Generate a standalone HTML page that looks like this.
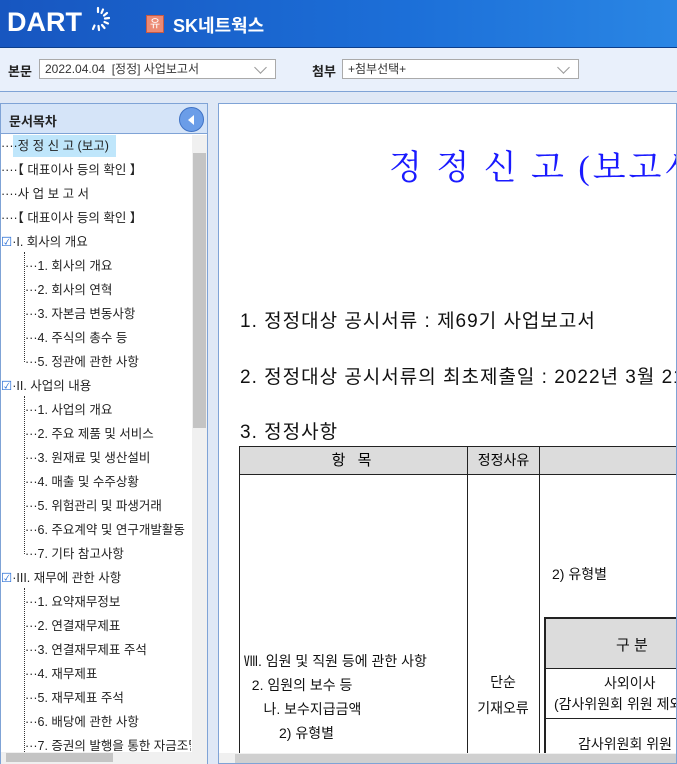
<!DOCTYPE html>
<html><head><meta charset="utf-8"><style>
*{margin:0;padding:0;box-sizing:border-box}
body{width:677px;height:764px;overflow:hidden;background:#dfe8f6;font-family:"Liberation Sans","Noto Sans CJK KR",sans-serif;position:relative}
.hdr{position:absolute;left:0;top:0;width:677px;height:48px;background:linear-gradient(90deg,#1756c0,#1c6fd8 60%,#2a86e4);border-bottom:1px solid #0d3f8c}
.tb{position:absolute;left:0;top:48px;width:677px;height:44px;background:#e9f0fb;border-bottom:1px solid #7fa3d6}
.lbl{position:absolute;top:13px;font-size:13px;font-weight:bold;color:#222}
.sel{position:absolute;top:11px;height:20px;background:#fff;border:1px solid #aaa;font-size:12px;color:#333;padding:2px 5px;line-height:14px}
.sel:after{content:"";position:absolute;right:10px;top:3px;width:8px;height:8px;border-right:1px solid #999;border-bottom:1px solid #999;transform:rotate(45deg)}
.lp{position:absolute;left:0;top:103px;width:208px;height:661px;background:#fff;border:1px solid #7fa3d6}
.lph{height:30px;background:#d5e4f8;border-bottom:1px solid #7fa3d6;font-size:13px;font-weight:bold;color:#222;padding:7px 8px}
.circ{position:absolute;left:178px;top:3px;width:25px;height:25px;border-radius:50%;background:#6b9de8;border:1px solid #3f72c4}
.circ:after{content:"";position:absolute;left:8px;top:7px;border-right:6px solid #fff;border-top:5px solid transparent;border-bottom:5px solid transparent}
.it{position:absolute;font-size:12.5px;color:#222;white-space:nowrap;line-height:16px}
.sb{position:absolute;left:191px;top:31px;width:15px;height:617px;background:#f0f0f0}
.doc{position:absolute;left:218px;top:103px;width:459px;height:661px;background:#fff;border:1px solid #7fa3d6;overflow:hidden}
.t{position:absolute;white-space:nowrap;color:#111}
.big{font-size:19px;letter-spacing:1px}
.cell{position:absolute;border:1px solid #222}
</style></head><body>
<div class="hdr">
<div style="position:absolute;left:7px;top:7px;font-size:27px;font-weight:bold;color:#fff;font-family:'Liberation Sans',sans-serif">DART</div>
<svg style="position:absolute;left:86px;top:6px" width="24" height="26" viewBox="0 0 24 26"><g stroke="#fff" stroke-width="2.2" stroke-linecap="round"><line x1="12" y1="2" x2="12" y2="6"/><line x1="17" y1="3.5" x2="15.5" y2="7"/><line x1="21" y1="7" x2="18" y2="9.5"/><line x1="23" y1="12" x2="19" y2="12.5"/><line x1="22" y1="17.5" x2="18.5" y2="16"/><line x1="18.5" y1="22" x2="16" y2="19"/><line x1="13" y1="24" x2="12.5" y2="20"/><line x1="7" y1="23" x2="8.5" y2="19.5"/></g></svg>
<div style="position:absolute;left:146px;top:15px;width:18px;height:18px;background:#ec8a74;border:1px solid #c65a44;color:#fff;font-size:11px;text-align:center;line-height:16px">유</div>
<div style="position:absolute;left:173px;top:12px;font-size:18px;font-weight:bold;color:#fff">SK네트웍스</div>
</div>
<div class="tb">
<div class="lbl" style="left:8px">본문</div>
<div class="sel" style="left:39px;width:237px">2022.04.04 &nbsp;[정정] 사업보고서</div>
<div class="lbl" style="left:312px">첨부</div>
<div class="sel" style="left:342px;width:237px">+첨부선택+</div>
</div>
<div class="lp">
<div class="lph">문서목차<div class="circ"></div></div>
<div class="sb"><div style="position:absolute;left:1px;top:18px;width:13px;height:275px;background:#c4c4c4"></div></div>
<div style="position:absolute;left:12px;top:31px;width:103px;height:22px;background:#bfe6fb"></div>
<div style="position:absolute;left:23px;top:148px;height:110px;border-left:1px dotted #333"></div>
<div style="position:absolute;left:23px;top:292px;height:158px;border-left:1px dotted #333"></div>
<div style="position:absolute;left:23px;top:484px;height:164px;border-left:1px dotted #333"></div>
<div class="it" style="left:0;top:34px">····정 정 신 고 (보고)</div>
<div class="it" style="left:0;top:58px">····【 대표이사 등의 확인 】</div>
<div class="it" style="left:0;top:82px">····사 업 보 고 서</div>
<div class="it" style="left:0;top:106px">····【 대표이사 등의 확인 】</div>
<div class="it" style="left:0;top:130px"><span style="color:#2a6fd6">☑</span>·I. 회사의 개요</div>
<div class="it" style="left:24px;top:154px">···1. 회사의 개요</div>
<div class="it" style="left:24px;top:178px">···2. 회사의 연혁</div>
<div class="it" style="left:24px;top:202px">···3. 자본금 변동사항</div>
<div class="it" style="left:24px;top:226px">···4. 주식의 총수 등</div>
<div class="it" style="left:24px;top:250px">···5. 정관에 관한 사항</div>
<div class="it" style="left:0;top:274px"><span style="color:#2a6fd6">☑</span>·II. 사업의 내용</div>
<div class="it" style="left:24px;top:298px">···1. 사업의 개요</div>
<div class="it" style="left:24px;top:322px">···2. 주요 제품 및 서비스</div>
<div class="it" style="left:24px;top:346px">···3. 원재료 및 생산설비</div>
<div class="it" style="left:24px;top:370px">···4. 매출 및 수주상황</div>
<div class="it" style="left:24px;top:394px">···5. 위험관리 및 파생거래</div>
<div class="it" style="left:24px;top:418px;width:166px;overflow:hidden">···6. 주요계약 및 연구개발활동</div>
<div class="it" style="left:24px;top:442px">···7. 기타 참고사항</div>
<div class="it" style="left:0;top:466px"><span style="color:#2a6fd6">☑</span>·III. 재무에 관한 사항</div>
<div class="it" style="left:24px;top:490px">···1. 요약재무정보</div>
<div class="it" style="left:24px;top:514px">···2. 연결재무제표</div>
<div class="it" style="left:24px;top:538px">···3. 연결재무제표 주석</div>
<div class="it" style="left:24px;top:562px">···4. 재무제표</div>
<div class="it" style="left:24px;top:586px">···5. 재무제표 주석</div>
<div class="it" style="left:24px;top:610px">···6. 배당에 관한 사항</div>
<div class="it" style="left:24px;top:634px;width:166px;overflow:hidden">···7. 증권의 발행을 통한 자금조달</div>
<div style="position:absolute;left:0;top:648px;width:206px;height:12px;background:#f0f0f0"><div style="position:absolute;left:5px;top:1px;width:107px;height:9px;background:#c4c4c4"></div></div>
</div>
<div class="doc">
<div class="t" style="left:170px;top:36px;font-family:'Liberation Serif','Noto Serif CJK KR','Noto Serif CJK SC',serif;font-size:34px;color:#1a1aff;letter-spacing:3px">정 정 신 고 (보고서)</div>
<div class="t big" style="left:21px;top:202px">1. 정정대상 공시서류 : 제69기 사업보고서</div>
<div class="t big" style="left:21px;top:258px">2. 정정대상 공시서류의 최초제출일 : 2022년 3월 21일</div>
<div class="t big" style="left:21px;top:313px">3. 정정사항</div>
<div class="cell" style="left:20px;top:342px;width:229px;height:29px;background:#dcdcdc;text-align:center;font-size:15px;line-height:27px;letter-spacing:4px">항 목</div>
<div class="cell" style="left:248px;top:342px;width:73px;height:29px;background:#dcdcdc;text-align:center;font-size:14px;line-height:27px">정정사유</div>
<div class="cell" style="left:320px;top:342px;width:200px;height:29px;background:#dcdcdc"></div>
<div class="cell" style="left:20px;top:370px;width:229px;height:300px"></div>
<div class="cell" style="left:248px;top:370px;width:73px;height:300px"></div>
<div class="cell" style="left:320px;top:370px;width:200px;height:300px"></div>
<div class="t" style="left:25px;top:545px;font-size:14px;line-height:24px">Ⅷ. 임원 및 직원 등에 관한 사항<br>&nbsp;&nbsp;2. 임원의 보수 등<br>&nbsp;&nbsp;&nbsp;&nbsp;&nbsp;나. 보수지급금액<br>&nbsp;&nbsp;&nbsp;&nbsp;&nbsp;&nbsp;&nbsp;&nbsp;&nbsp;2) 유형별</div>
<div class="t" style="left:254px;top:565px;font-size:14px;line-height:26px;text-align:center;width:60px">단순<br>기재오류</div>
<div class="t" style="left:333px;top:460px;font-size:14px">2) 유형별</div>
<div class="cell" style="left:325px;top:513px;width:200px;height:52px;background:#dcdcdc;border-width:2px 1px 1px 2px"><div class="t" style="left:70px;top:15px;font-size:15px">구 분</div></div>
<div class="cell" style="left:325px;top:564px;width:200px;height:51px;border-left-width:2px;text-align:center"><div class="t" style="left:58px;top:4px;font-size:14px">사외이사</div><div class="t" style="left:8px;top:25px;font-size:14px">(감사위원회 위원 제외)</div></div>
<div class="cell" style="left:325px;top:614px;width:200px;height:60px;border-left-width:2px"><div class="t" style="left:32px;top:15px;font-size:14px">감사위원회 위원</div></div>
<div style="position:absolute;left:0;top:649px;width:459px;height:12px;background:#f0f0f0"><div style="position:absolute;left:16px;top:1px;width:443px;height:9px;background:#d0d0d0"></div></div>
</div>
</body></html>
